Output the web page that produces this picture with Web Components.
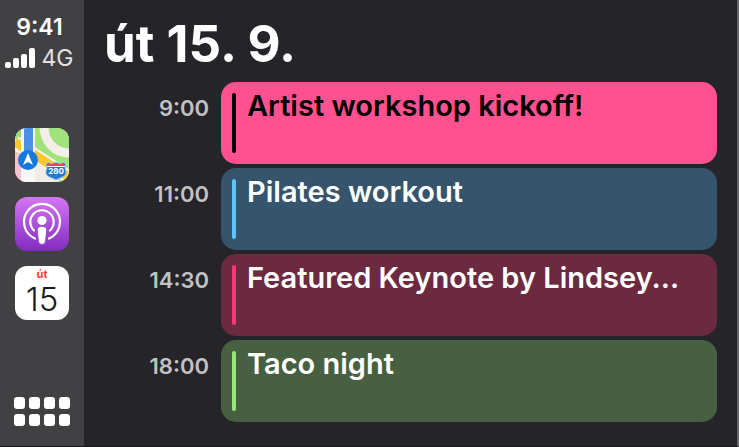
<!DOCTYPE html>
<html lang="cs">
<head>
<meta charset="utf-8">
<meta name="viewport" content="width=device-width, initial-scale=1">
<title>CarPlay Calendar</title>
<style>
html, body { margin: 0; min-height: 100%; background: #252429; }
body { font-family: Inter, "Liberation Sans", sans-serif; color: #fff; }
</style>
</head>
<body>
<car-screen>
  <car-dock slot="dock">
    <car-status slot="status" time="9:41" network="4G"></car-status>
    <app-maps></app-maps>
    <app-podcasts></app-podcasts>
    <app-calendar day="út" date="15"></app-calendar>
    <home-button slot="home"></home-button>
  </car-dock>
  <day-agenda heading="út 15. 9.">
    <calendar-event time="9:00" style="--fill:#ff518f;--bar:#000;--ink:#000">Artist workshop kickoff!</calendar-event>
    <calendar-event time="11:00" style="--fill:#36546b;--bar:#5ac4ff;--ink:#fff">Pilates workout</calendar-event>
    <calendar-event time="14:30" style="--fill:#6b2a40;--bar:#ff3479;--ink:#fff">Featured Keynote by Lindsey...</calendar-event>
    <calendar-event time="18:00" style="--fill:#476042;--bar:#93e876;--ink:#fff">Taco night</calendar-event>
  </day-agenda>
</car-screen>
<script>
const define = (name, render) => customElements.define(name, class extends HTMLElement {
  constructor() { super(); this.attachShadow({ mode: "open" }); }
  connectedCallback() { this.shadowRoot.innerHTML = render(this); }
});

const appButton = `
  :host { display: block; }
  button { display: block; width: 54px; height: 54px; padding: 0; border: 0; border-radius: 12px;
    overflow: hidden; background: none; color: inherit; font: inherit; }
  svg { display: block; width: 54px; height: 54px; }`;

define("car-screen", () => `
  <style>
    :host { display: grid; grid-template-columns: 84px minmax(0, 1fr); min-height: 100vh;
      box-sizing: border-box; border-right: 2px solid #68676c; border-bottom: 1px solid #18171c; background: #252429; }
  </style>
  <slot name="dock"></slot><slot></slot>`);

define("car-dock", () => `
  <style>
    :host { display: flex; flex-direction: column; align-items: center; box-sizing: border-box;
      padding: 13px 0 20px; background: #414042; }
    nav { display: flex; flex-direction: column; gap: 15px; margin-top: 53px; }
    footer { margin-top: auto; }
  </style>
  <slot name="status"></slot>
  <nav aria-label="Aplikace"><slot></slot></nav>
  <footer><slot name="home"></slot></footer>`);

define("car-status", el => `
  <style>
    :host { display: flex; flex-direction: column; align-items: center; padding-right: 5px; }
    time { font-size: 23px; line-height: 28px; font-weight: 600; }
    .net { display: flex; align-items: center; gap: 6px; font-size: 23px; line-height: 34px; color: #e2e2e3; }
    svg { display: block; width: 30px; height: 20px; }
  </style>
  <time>${el.getAttribute("time")}</time>
  <div class="net">
    <svg viewBox="0 0 30 20" fill="#fff" aria-hidden="true">
      <rect x="0" y="14" width="6" height="6" rx="2"/><rect x="8" y="10" width="6" height="10" rx="2"/>
      <rect x="16" y="6" width="6" height="14" rx="2"/><rect x="24" y="0" width="6" height="20" rx="2"/>
    </svg>
    <span>${el.getAttribute("network")}</span>
  </div>`);

define("app-maps", () => `
  <style>${appButton}</style>
  <button type="button" aria-label="Mapy">
    <svg viewBox="0 0 54 54">
      <rect width="54" height="54" fill="#f3efe8"/>
      <path d="M17 0H54V54H46L19 27Z" fill="#a0e27c"/>
      <path d="M29 0C30 14 40 25 54 25" fill="none" stroke="#f3eee7" stroke-width="9"/>
      <path d="M34 0H54V20C43 20 34 11 34 0Z" fill="#a0e27c"/>
      <path d="M19 28L40 40V54H19Z" fill="#efede5"/>
      <path d="M0 0H8V16L0 11Z" fill="#98dd77"/>
      <path d="M0 23L9 28V54H0Z" fill="#f8c2d1"/>
      <path d="M0 14L54 49" fill="none" stroke="#f5f2e6" stroke-width="13"/>
      <path d="M0 14L54 49" fill="none" stroke="#ffc72c" stroke-width="9"/>
      <path d="M6 0H20V54H6Z" fill="#f7f7f5"/>
      <path d="M9 0H18V31H9Z" fill="#4b92e7"/>
      <circle cx="13" cy="32" r="10" fill="#1478de"/>
      <path d="M13 25L18 37L13 34L8 37Z" fill="#fff"/>
      <path d="M33 34C35 36 38 36 41 34C44 36 47 36 49 34L51 37C50 39 50 41 51 43C52 49 46 49 41 52C36 49 30 49 31 43C32 41 32 39 31 37Z" fill="#2377cc" stroke="#9cc8ee" stroke-width="1"/>
      <path d="M33 35C36 37 38 36 41 35C44 36 47 37 49 35L50 38H32Z" fill="#e44b43"/>
      <path d="M32 38.5H50" stroke="#fff" stroke-width="1"/>
      <text x="41" y="46" text-anchor="middle" font-family="Inter, sans-serif" font-size="8" font-weight="700" fill="#fff">280</text>
    </svg>
  </button>`);

define("app-podcasts", () => `
  <style>${appButton}</style>
  <button type="button" aria-label="Podcasty">
    <svg viewBox="0 0 54 54">
      <defs><linearGradient id="g" x2="0" y2="1"><stop stop-color="#d577f3"/><stop offset="1" stop-color="#812bc0"/></linearGradient></defs>
      <rect width="54" height="54" fill="url(#g)"/>
      <g fill="none" stroke="#fff" stroke-linecap="round">
        <path d="M20 41.5A18 18 0 1 1 34 41.5" stroke-width="2.2"/>
        <path d="M19 33.5A11.7 11.7 0 1 1 35 33.5" stroke-width="2.2"/>
      </g>
      <path d="M22.2 33C22.2 28 31.8 28 31.8 33L30.6 44C30 48.5 24 48.5 23.4 44Z" fill="#fff" stroke="#a24bd6" stroke-width="1"/>
      <circle cx="27" cy="23.5" r="4.6" fill="#fff"/>
    </svg>
  </button>`);

define("app-calendar", el => `
  <style>${appButton}
    button { display: flex; flex-direction: column; align-items: center; background: #fff; }
    .day { margin-top: 2px; font-size: 11px; line-height: 13px; font-weight: 700; color: #fb3b35; }
    .date { font-size: 33px; line-height: 36px; font-weight: 300; color: #1b1b1c; }
  </style>
  <button type="button"><span class="day">${el.getAttribute("day")}</span><span class="date">${el.getAttribute("date")}</span></button>`);

define("home-button", () => `
  <style>
    :host { display: block; }
    button { display: grid; grid-template-columns: repeat(4, 11px); gap: 5px 4px; padding: 0; border: 0; background: none; }
    i { height: 12px; border-radius: 3px; background: #fff; }
  </style>
  <button type="button" aria-label="Plocha">${"<i></i>".repeat(8)}</button>`);

define("day-agenda", el => `
  <style>
    :host { display: block; padding: 12px 20px 20px; }
    h1 { margin: 0 0 6px; font-size: 51px; line-height: 64px; font-weight: 700; }
    .list { display: flex; flex-direction: column; gap: 4px; }
  </style>
  <h1>${el.getAttribute("heading")}</h1>
  <div class="list"><slot></slot></div>`);

define("calendar-event", el => `
  <style>
    :host { display: grid; grid-template-columns: 105px minmax(0, 1fr); gap: 12px; }
    time { padding-top: 12px; font-size: 22px; line-height: 28px; font-weight: 600; text-align: right; color: #c2c2c4; }
    article { display: flex; gap: 11px; min-height: 82px; box-sizing: border-box; padding: 11px;
      border-radius: 15px; background: var(--fill); color: var(--ink); }
    .bar { flex: none; width: 4px; border-radius: 2px; background: var(--bar); }
    h2 { margin: 0; min-width: 0; font-size: 29px; line-height: 26px; font-weight: 600; white-space: nowrap; }
  </style>
  <time>${el.getAttribute("time")}</time>
  <article><span class="bar"></span><h2><slot></slot></h2></article>`);
</script>
</body>
</html>
